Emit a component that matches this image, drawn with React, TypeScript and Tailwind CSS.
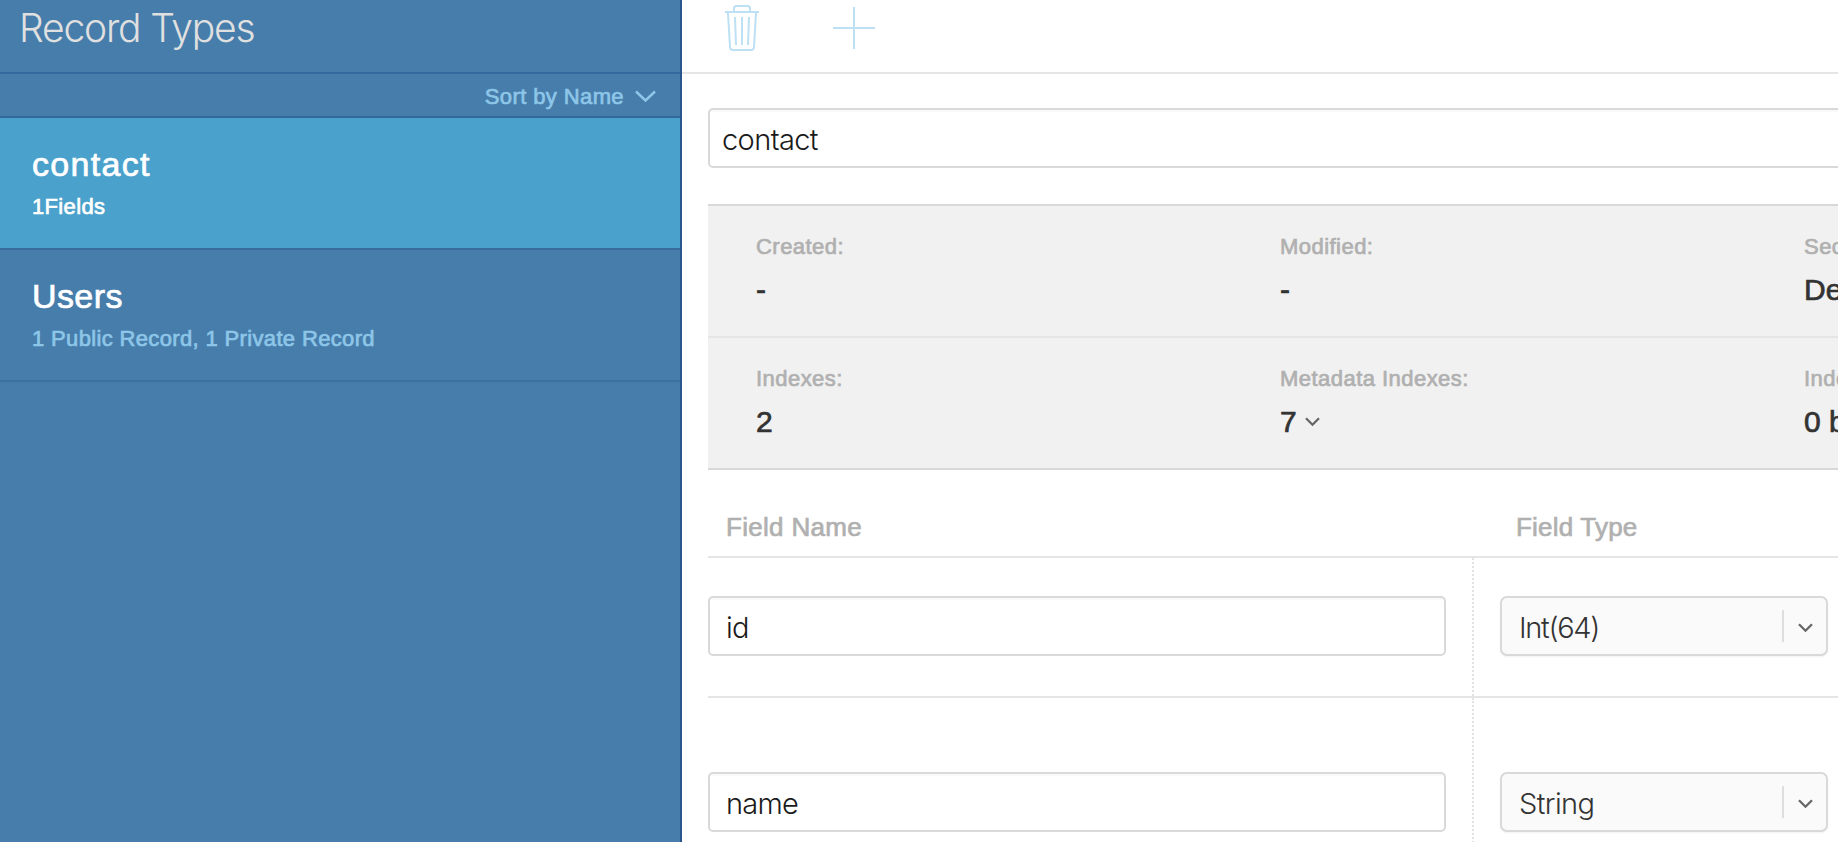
import type { ReactNode } from "react";

const MEDIUM = "font-['Liberation_Sans',Arial,sans-serif] [-webkit-text-stroke:0.7px_currentColor]";
const LIGHT = "font-['Inter','Liberation_Sans',sans-serif] font-light";

function TrashIcon() {
  return (
    <svg width="34" height="46" viewBox="0 0 34 46" fill="none" stroke="#bde0f4" strokeWidth="2">
      <path d="M0 7H34" />
      <path d="M9 7V3.5Q9 1 11.5 1H22.5Q25 1 25 3.5V7" />
      <path d="M3 8L5 42Q5.200 45 8 45H26Q28.800 45 29 42L31 8" />
      <path d="M10 12L11 40M17 12V40M24 12L23 40" />
    </svg>
  );
}

function PlusIcon() {
  return (
    <svg width="42" height="42" viewBox="0 0 42 42" fill="none" stroke="#bde0f4" strokeWidth="2">
      <path d="M0 21H42M21 0V42" />
    </svg>
  );
}

function SmallChevron() {
  return (
    <svg width="15" height="10" viewBox="0 0 15 10" fill="none" stroke="#666" strokeWidth="2.300">
      <path d="M1 1.200L7.500 7.700L14 1.200" />
    </svg>
  );
}

function TypeItem(props: { name: string; nameClass: string; detail: string; selected?: boolean }) {
  return (
    <li
      className={
        props.selected
          ? "h-[132px] border-b-2 border-[#396b9f] bg-[#4aa1cb] pl-8 pt-[26px] text-white"
          : "h-[132px] border-b-2 border-[#3c70a3] pl-8 pt-[26px] text-[#8dc6e8]"
      }
    >
      <div className={`text-[34px] leading-[40px] text-white ${props.nameClass} ${MEDIUM}`}>{props.name}</div>
      <div className={`text-[22px] leading-[46px] tracking-[0.35px] ${MEDIUM}`}>{props.detail}</div>
    </li>
  );
}

function Stat({ label, children }: { label: string; children: ReactNode }) {
  return (
    <div className="w-[524px] shrink-0 pl-12 pt-[27px]">
      <div className={`whitespace-nowrap text-[22px] leading-[28px] tracking-[0.46px] text-[#b0b0b0] ${MEDIUM}`}>{label}</div>
      <div className={`mt-[9px] flex items-center whitespace-nowrap text-[30px] leading-[40px] text-[#333] ${MEDIUM}`}>
        {children}
      </div>
    </div>
  );
}

function TextBox({ value, className }: { value: string; className: string }) {
  return (
    <div
      className={`h-[60px] rounded-[5px] border-2 border-[#d9d9d9] bg-white pt-[3px] text-[29px] leading-[53px] text-[#1a1a1a] shadow-[inset_0_2px_1px_#f9f9f9] ${className} ${LIGHT}`}
    >
      {value}
    </div>
  );
}

function SelectBox({ value, className }: { value: string; className: string }) {
  return (
    <div className="flex h-[60px] w-[328px] items-center rounded-[7px] border-2 border-[#d9d9d9] bg-[#fafafa] pl-[17px] pr-[13px] shadow-[0_1px_2px_#f2f2f2]">
      <span className={`flex-1 pt-[3px] text-[29px] leading-[53px] text-[#333] ${className} ${LIGHT}`}>{value}</span>
      <span className="mr-3.5 h-8 w-0.5 bg-[#dedede]" />
      <div className="pt-[3px]">
        <SmallChevron />
      </div>
    </div>
  );
}

function FieldRow(props: { name: string; type: string; nameClass: string; typeClass: string; layout: string }) {
  return (
    <div className="flex border-b-2 border-[#e5e5e5]">
      <div className={`w-[766px] shrink-0 border-r-2 border-dotted border-[#e2e2e2] pr-[26px] ${props.layout}`}>
        <TextBox value={props.name} className={`pl-4 ${props.nameClass}`} />
      </div>
      <div className={`pl-[26px] ${props.layout}`}>
        <SelectBox value={props.type} className={props.typeClass} />
      </div>
    </div>
  );
}

export default function App() {
  return (
    <div className="flex h-[842px] w-[1838px] overflow-hidden bg-white">
      <aside className="flex w-[682px] shrink-0 flex-col border-r-2 border-[#29568c] bg-[#477dab]">
        <header className="h-[74px] border-b-2 border-[#33689d] pl-[19px]">
          <h1 className={`text-[39px] leading-[56px] tracking-[-1.2px] text-[#e0e0e0] ${LIGHT}`}>Record Types</h1>
        </header>
        <div className="flex h-[44px] items-start justify-end border-b-2 border-[#33689d] pr-6 text-[#8dc6e8]">
          <span className={`text-[22px] leading-[46px] tracking-[0.4px] ${MEDIUM}`}>Sort by Name</span>
          <svg className="ml-[11px] mt-4" width="21" height="13" viewBox="0 0 21 13" fill="none" stroke="currentColor" strokeWidth="2.500">
            <path d="M1 1.500L10.500 10.500L20 1.500" />
          </svg>
        </div>
        <ul>
          <TypeItem name="contact" nameClass="tracking-[1.3px]" detail="1Fields" selected />
          <TypeItem name="Users" nameClass="tracking-[0.4px]" detail="1 Public Record, 1 Private Record" />
        </ul>
      </aside>

      <main className="min-w-0 flex-1">
        <div className="flex h-[74px] items-start gap-[74px] border-b-2 border-[#e5e5e5] pl-[43px] pt-[5px]">
          <TrashIcon />
          <div className="pt-0.5">
            <PlusIcon />
          </div>
        </div>
        <div className="w-[1400px] pl-[26px] pt-[34px]">
          <TextBox value="contact" className="pl-3 tracking-[-0.6px]" />

          <section className="mt-9 border-y-2 border-[#d8d8d8] bg-[#f1f1f1]">
            <div className="flex h-[132px] border-b-2 border-[#e5e5e5]">
              <Stat label="Created:">-</Stat>
              <Stat label="Modified:">-</Stat>
              <Stat label="Security:">Default</Stat>
            </div>
            <div className="flex h-[130px]">
              <Stat label="Indexes:">2</Stat>
              <Stat label="Metadata Indexes:">
                <span className="mr-2">7</span>
                <SmallChevron />
              </Stat>
              <Stat label="Index Size:">0 bytes</Stat>
            </div>
          </section>

          <section>
            <div className={`flex h-[88px] border-b-2 border-[#e5e5e5] pt-[43px] text-[26px] leading-[28px] text-[#b0b0b0] ${MEDIUM}`}>
              <div className="w-[790px] pl-[18px] tracking-[0.3px]">Field Name</div>
              <div className="pl-[18px] tracking-[0.2px]">Field Type</div>
            </div>
            <FieldRow name="id" type="Int(64)" nameClass="tracking-[-0.8px]" typeClass="tracking-[-1.3px]" layout="h-[138px] pt-[38px]" />
            <FieldRow name="name" type="String" nameClass="tracking-[-0.8px]" typeClass="tracking-[-0.6px]" layout="h-[176px] pt-[74px]" />
          </section>
        </div>
      </main>
    </div>
  );
}
